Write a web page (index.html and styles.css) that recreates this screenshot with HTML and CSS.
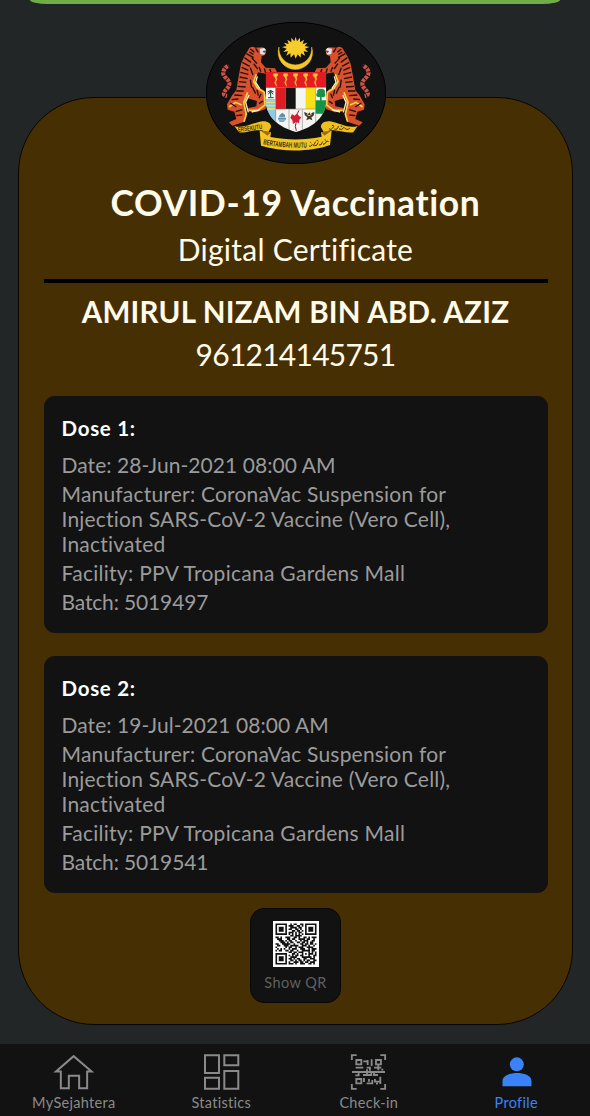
FILE: index.html
```html
<!DOCTYPE html>
<html lang="en">
<head>
<meta charset="utf-8">
<title>Digital Certificate</title>
<link rel="stylesheet" href="styles.css">
</head>
<body>
<div class="screen">
  <div class="status-card"></div>
  <main class="certificate">
    <svg class="emblem" viewBox="33 21 540 426" aria-hidden="true">
      <defs>
        <g id="tiger">
          <path d="M101 152C84 160 80 176 90 186C105 199 108 208 96 221C84 232 82 240 96 243" fill="none" stroke="#cf5446" stroke-width="12"/>
          <path d="M101 152C84 160 80 176 90 186C105 199 108 208 96 221C84 232 82 240 96 243" fill="none" stroke="#121212" stroke-width="13" stroke-dasharray="3 9"/>
          <path d="M160 104C164 94 174 94 180 98L204 97L214 106L210 119L200 124L198 142L212 158L240 160L246 172L212 176L190 172L178 190L184 212L206 226L215 250L212 282L184 292L160 288L156 280L184 274L186 258L158 250L150 268L154 300L148 320L112 332L102 322L124 312L118 290L98 284L96 268L112 240L124 226L130 190L138 146L148 124Z" fill="#d9502c"/>
          <path d="M184 178L176 200L188 220L208 232L210 270L188 286L162 286M158 232L146 262L154 298L147 320M140 270L122 262L102 276" fill="none" stroke="#fbd344" stroke-width="5"/>
          <path d="M187 184L182 202L194 220M162 240L152 262L160 292M194 284L170 291" fill="none" stroke="#fff3cf" stroke-width="4"/>
          <path d="M154 116L176 128M148 128L168 142M142 142L164 154M140 157L160 166M136 172L160 178M134 186L158 191M132 200L154 202M128 214L152 216M124 228L146 228M118 240L142 242M110 254L130 252M106 264L124 276M122 290L142 284M124 302L142 300M170 128L186 146M176 146L188 162M166 158L174 180M192 156L198 170M208 160L212 174M224 162L228 172M166 194L170 218M172 216L182 236M186 224L190 242M198 236L192 250M204 258L192 266M166 102L178 112M182 100L190 112M163 111L175 118" fill="none" stroke="#1b1210" stroke-width="4"/>
          <path d="M194 101L208 99L213 105L203 110L212 113L207 119L196 117Z" fill="#dce8ef"/>
          <path d="M203 108L213 107L207 114Z" fill="#28536c"/>
        </g>
        <path id="keris" d="M-7 176H5V182L1 185L3 193L-1 201L2 214L-4 203L0 194L-3 186L-8 182Z" fill="#f6c431" stroke="#f6c431" stroke-width="1.500"/>
      </defs>
      <ellipse cx="303" cy="234" rx="269" ry="212" fill="#121212" stroke="#000" stroke-width="3"/>
      <path d="M252 96A51.500 51.500 0 1 0 350 96A49.200 49.200 0 1 1 252 96Z" fill="#f5c629" stroke="#f5c629" stroke-width="1.500"/>
      <path d="M302 65L306 79L315 68L315 82L327 74L323 87L337 83L329 93L343 96L330 101L339 111L326 109L330 122L318 115L317 128L308 118L302 131L297 118L287 128L286 115L274 122L279 109L265 111L275 101L261 96L275 93L267 83L281 87L277 74L289 82L289 68L298 79Z" fill="#f6cd2a"/>
      <use href="#tiger"/>
      <use href="#tiger" transform="translate(605 0) scale(-1 1)"/>
      <clipPath id="shield"><path d="M212 171H394V252C394 304 358 336 303 351C248 336 212 304 212 252Z"/></clipPath>
      <g clip-path="url(#shield)">
        <path d="M212 171H394V351H212Z" fill="#f4f4f1"/>
        <path d="M212 171H394V218H212Z" fill="#e31b23"/>
        <path d="M242 218H272V282H242Z" fill="#df1b21"/>
        <path d="M272 218H302V282H272Z" fill="#151313"/>
        <path d="M332 218H362V282H332Z" fill="#f8df16"/>
        <path d="M362 218H394V282H362Z" fill="#fff"/>
        <path d="M212 256H242V320H212Z" fill="#8ccbe4"/>
        <path d="M212 262H242M212 272H242M212 282H242" stroke="#f1df63" stroke-width="4"/>
        <path d="M212 254H242M242 218V351M362 218V351M282 282V351M322 282V351M242 282H362" fill="none" stroke="#74706b" stroke-width="1.5"/>
        <path d="M227 225V246M219 248H236M218 231Q227 222 236 231M220 238L227 228L234 238" fill="none" stroke="#174c48" stroke-width="3"/>
        <path d="M362 256H394V296H362Z" fill="#129548"/>
        <path d="M375 258V246C362 248 362 236 367 233C364 226 372 220 379 222C386 219 393 229 389 234C395 243 387 249 380 246V258Z" fill="#169346"/>
        <path d="M254 300L262 293L270 300V306L274 312L266 320H254L249 312Z" fill="#5c8eae"/>
        <path d="M251 307H273M252 315H272" stroke="#e5edf2" stroke-width="2"/>
        <path d="M291 297L299 302L306 295L312 303L319 307L313 315L312 325L303 320L294 327L292 316L286 308Z" fill="#d51b36"/>
        <path d="M304 320Q298 335 304 347M307 296L312 286" fill="none" stroke="#8c1725" stroke-width="3"/>
        <path d="M328 291Q337 293 339 298L343 292L347 298Q351 291 358 292Q358 304 349 306L352 316L343 312L334 316L337 306Q327 302 328 291Z" fill="#3f3932"/>
        <path d="M335 298L342 302L350 298" fill="none" stroke="#f4cf29" stroke-width="3"/>
      </g>
      <use href="#keris" x="243"/><use href="#keris" x="273"/><use href="#keris" x="303"/><use href="#keris" x="333"/><use href="#keris" x="362"/>
      <path d="M118 333C144 342 170 325 201 319C218 317 230 326 228 337L220 351L198 346C175 343 153 356 132 352Z" fill="#f0c020"/>
      <path d="M488 333C462 342 436 325 405 319C388 317 376 326 378 337L386 351L408 346C431 343 455 356 475 352Z" fill="#f0c020"/>
      <path d="M194 347L228 352L226 366C280 376 326 376 380 365L378 352L410 347L405 390C348 411 262 412 198 392Z" fill="#f3c522"/>
      <path d="M197 347L227 352L218 362ZM409 347L379 352L388 362Z" fill="#9f6a11"/>
      <path id="motto-left" d="M130 350Q163 347 204 341" fill="none"/>
      <path id="motto" d="M204 388Q272 401 338 398" fill="none"/>
      <g class="motto">
        <text><textPath href="#motto-left" textLength="73" lengthAdjust="spacingAndGlyphs">ERSEKUTU</textPath></text>
        <text class="motto-main"><textPath href="#motto" textLength="132" lengthAdjust="spacingAndGlyphs">BERTAMBAH MUTU</textPath></text>
      </g>
      <path d="M342 393Q348 397 352 388M354 393L362 380M358 392Q366 395 369 383M372 390Q379 393 383 380M384 388Q391 389 395 378L401 380M346 382L349 384M365 376L370 378M389 374L393 376M402 341Q410 347 416 334M418 342Q428 346 430 333M432 342Q441 347 447 337Q455 348 464 340M411 331L416 332M437 333L442 334M421 349L427 350" fill="none" stroke="#4b3108" stroke-width="3"/>
    </svg>

    <h1 class="title">COVID-19 Vaccination</h1>
    <p class="subtitle">Digital Certificate</p>
    <hr class="rule">
    <h2 class="holder">AMIRUL NIZAM BIN ABD. AZIZ</h2>
    <p class="holder-id">961214145751</p>

    <section class="dose">
      <h3 class="dose-title">Dose 1:</h3>
      <p class="detail date">Date: 28-Jun-2021 08:00 AM</p>
      <p class="detail">Manufacturer: CoronaVac Suspension for<br>Injection SARS-CoV-2 Vaccine (Vero Cell),<br>Inactivated</p>
      <p class="detail facility">Facility: PPV Tropicana Gardens Mall</p>
      <p class="detail batch">Batch: 5019497</p>
    </section>
    <section class="dose">
      <h3 class="dose-title">Dose 2:</h3>
      <p class="detail date">Date: 19-Jul-2021 08:00 AM</p>
      <p class="detail">Manufacturer: CoronaVac Suspension for<br>Injection SARS-CoV-2 Vaccine (Vero Cell),<br>Inactivated</p>
      <p class="detail facility">Facility: PPV Tropicana Gardens Mall</p>
      <p class="detail batch">Batch: 5019541</p>
    </section>

    <button class="qr-button">
      <svg class="qr" viewBox="-1.5 -1.5 28 28" aria-hidden="true"><rect x="-1.5" y="-1.5" width="28" height="28" fill="#fff"/><path id="qr-modules" fill="#111"/></svg>
      <span class="qr-label">Show QR</span>
    </button>
  </main>

  <nav class="tabs">
    <a class="tab">
      <svg class="tab-icon" viewBox="160 74 124 108"><path d="M169 126.500L222 80.500L276 126.500H262.500V177H238.500V139H207.500V177H183.500V126.500Z" fill="none" stroke="currentColor" stroke-width="6"/></svg>
      <span class="tab-label">MySejahtera</span>
    </a>
    <a class="tab">
      <svg class="tab-icon" viewBox="604 74 124 108"><path d="M616 77.500H658V131H616ZM674 77.500H716V108H674ZM616 145H658V178H616ZM674 125H716V178H674Z" fill="none" stroke="currentColor" stroke-width="6"/></svg>
      <span class="tab-label">Statistics</span>
    </a>
    <a class="tab">
      <svg class="tab-icon" viewBox="162 74 124 108"><path d="M173.500 92V77.500H188M259 77.500H273.500V92M173.500 164V178.500H188M259 178.500H273.500V164M174 128H273M187 92H202V105H187ZM246 92H261V105H246ZM187 149H202V162H187ZM208 96H222M221 92V107M233 90V110M185 115H208M218 115H228V124M240 115H262M253 106V123M194 128V138H184M207 137H232V127M240 128V137H252M219 120V137M210 146V158M218 162H235V152M225 149V157M243 149V157H260M259 142V164M246 163H252M262 121H268" fill="none" stroke="currentColor" stroke-width="5.500"/></svg>
      <span class="tab-label">Check-in</span>
    </a>
    <a class="tab active">
      <svg class="tab-icon" viewBox="604.500 74 124 108"><circle cx="667" cy="105" r="21" fill="currentColor"/><path d="M624 171V155C624 138 648 131 667.500 131C687 131 711 138 711 155V171Z" fill="currentColor"/></svg>
      <span class="tab-label">Profile</span>
    </a>
  </nav>
</div>
<script src="qr.js"></script>
</body>
</html>
```
FILE: styles.css
```css
* { box-sizing: border-box; margin: 0; padding: 0; }

body {
  background: #232627;
  font-family: Lato, "Liberation Sans", sans-serif;
  font-variant-ligatures: none;
}

.screen {
  display: flex;
  flex-direction: column;
  width: 590px;
  height: 1116px;
  overflow: hidden;
}

.status-card {
  flex: none;
  width: 530px;
  height: 4px;
  margin-left: 30px;
  background: #70ad47;
  border-radius: 0 0 18px 18px / 0 0 4px 4px;
}

.certificate {
  position: relative;
  flex: none;
  display: flex;
  flex-direction: column;
  align-items: center;
  width: 555px;
  height: 928px;
  margin: 93px 0 0 18px;
  padding: 85px 25px 0;
  background: #462f02;
  border: 1px solid #0a0500;
  border-radius: 76px;
  color: #fffbea;
}

.emblem {
  position: absolute;
  top: -76px;
  left: 187px;
  width: 180px;
  height: 142px;
}

.motto {
  font: bold 20px "Liberation Sans", sans-serif;
  fill: #4b3108;
}

.motto-main { font-size: 23px; }

.title {
  font-size: 35.5px;
  line-height: 40px;
  font-weight: 700;
  letter-spacing: 0.6px;
  white-space: nowrap;
}

.subtitle {
  margin-top: 8px;
  font-size: 30px;
  line-height: 36px;
  letter-spacing: 0.25px;
  white-space: nowrap;
}

.rule {
  width: 504px;
  height: 4px;
  margin: 12px 0 11px;
  background: #000;
  border: 0;
}

.holder {
  font-size: 29.5px;
  line-height: 36px;
  letter-spacing: 0.24px;
  white-space: nowrap;
}

.holder-id {
  margin: 6px 0 24px;
  font-size: 30px;
  line-height: 36px;
  letter-spacing: -0.75px;
}

.dose {
  width: 504px;
  height: 237px;
  margin-bottom: 23px;
  padding: 20px 18px;
  background: #121212;
  border-radius: 11px;
}

.dose + .dose { margin-bottom: 15px; }

.dose-title {
  margin-bottom: 10.5px;
  color: #fff;
  font-size: 20.5px;
  line-height: 25px;
  letter-spacing: 0.7px;
}

.detail {
  margin-bottom: 4px;
  color: #9b9b9b;
  font-size: 21px;
  line-height: 25px;
  letter-spacing: 0.2px;
  white-space: nowrap;
}

.date { letter-spacing: 0.06px; }
.facility { letter-spacing: 0.28px; }
.batch { letter-spacing: -0.15px; }

.qr-button {
  display: flex;
  flex-direction: column;
  align-items: center;
  width: 91px;
  height: 95px;
  padding-top: 12px;
  background: #121212;
  border: 1px solid #080808;
  border-radius: 14px;
  color: #606060;
  font-family: inherit;
}

.qr { width: 46px; height: 46px; }

.qr-label {
  margin-top: 7px;
  font-size: 14.5px;
  line-height: 18px;
  letter-spacing: 0.45px;
}

.tabs {
  display: grid;
  grid-template-columns: repeat(4, 1fr);
  height: 73px;
  margin-top: auto;
  padding-top: 11px;
  background:
    linear-gradient(#1b2930, #1b2930) 18px 0 / 555px 1px no-repeat,
    linear-gradient(#232627, #232627) 0 0 / 590px 1px no-repeat,
    #121212;
}

.tab {
  display: flex;
  flex-direction: column;
  align-items: center;
  color: #8a8a8a;
}

.tab.active { color: #3a82f7; }

.tab-icon { width: 41.3px; height: 36px; }

.tab-label {
  margin-top: 4px;
  font-size: 14.5px;
  line-height: 18px;
  letter-spacing: 0.3px;
}
```
FILE: qr.js
```js
const rows = [
  "1111111001011001101111111",
  "1000001011100110101000001",
  "1011101001111011001011101",
  "1011101011001101001011101",
  "1011101000110110101011101",
  "1000001011101011001000001",
  "1111111010101010101111111",
  "0000000001101111000000000",
  "1101001110011010011010111",
  "0111000110110011110110010",
  "0011101011001001011100110",
  "0001110101100110110101100",
  "1100111110010001101101101",
  "0110011101111100111010010",
  "1000001011001011100111100",
  "0101010010111001110010111",
  "1011001101100100111110110",
  "0000000011011011100010101",
  "1111111000110100101011101",
  "1000001010101101100010011",
  "1011101001111000111111010",
  "1011101011010110011001110",
  "1011101001101011010110011",
  "1000001010011101101101110",
  "1111111011101001110011010"
];

document.getElementById("qr-modules").setAttribute("d", rows.map((row, y) =>
  [...row].map((cell, x) => cell === "1" ? `M${x} ${y}h1v1h-1z` : "").join("")
).join(""));
```
